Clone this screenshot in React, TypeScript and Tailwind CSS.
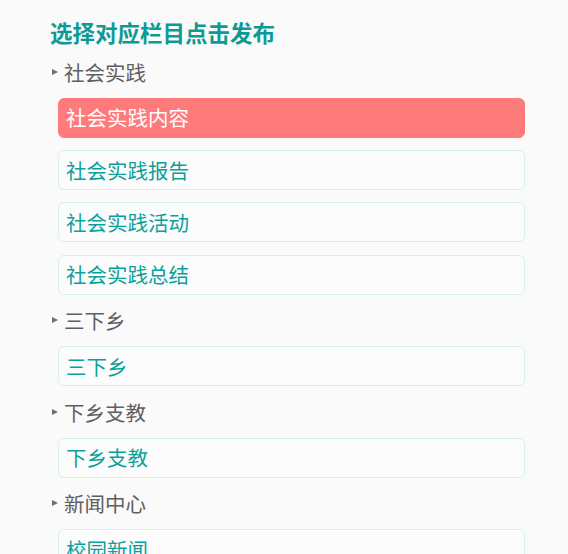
const sections = [
  { name: "社会实践", items: ["社会实践内容", "社会实践报告", "社会实践活动", "社会实践总结"] },
  { name: "三下乡", items: ["三下乡"] },
  { name: "下乡支教", items: ["下乡支教"] },
  { name: "新闻中心", items: ["校园新闻"] },
];

export default function App() {
  return (
    <div
      className="h-[554px] overflow-hidden bg-[#fafafa] pl-[50px] pr-[43px] pt-[17px]"
      style={{ fontFamily: '"Microsoft YaHei", "Noto Sans CJK SC", sans-serif' }}
    >
      <h1 className="text-[22.5px] leading-[30px] font-bold text-[#0e9a94]">选择对应栏目点击发布</h1>
      <div className="mt-[11.5px]">
        {sections.map((sec) => (
          <div key={sec.name}>
            <div className="flex h-[26px] items-center">
              <span className="ml-[2px] mr-[6px] h-0 w-0 border-y-[3.5px] border-l-[6px] border-y-transparent border-l-[#707070]" />
              <span className="text-[20.5px] leading-[26px] text-[#5f5f5f]">{sec.name}</span>
            </div>
            <div className="ml-[8px] flex flex-col gap-[12.4px] pt-[13px] pb-[12.5px]">
              {sec.items.map((item, i) => (
                <div
                  key={item}
                  className={
                    sec.name === "社会实践" && i === 0
                      ? "flex h-[40px] items-center rounded-[6px] border border-[#ff7b7b] bg-[#ff7b7b] pl-[7px] text-[20.5px] text-white"
                      : "flex h-[40px] items-center rounded-[6px] border border-[#d9eef0] bg-[#fcfcfc] pl-[7px] text-[20.5px] text-[#0aa19c]"
                  }
                >
                  {item}
                </div>
              ))}
            </div>
          </div>
        ))}
      </div>
    </div>
  );
}
